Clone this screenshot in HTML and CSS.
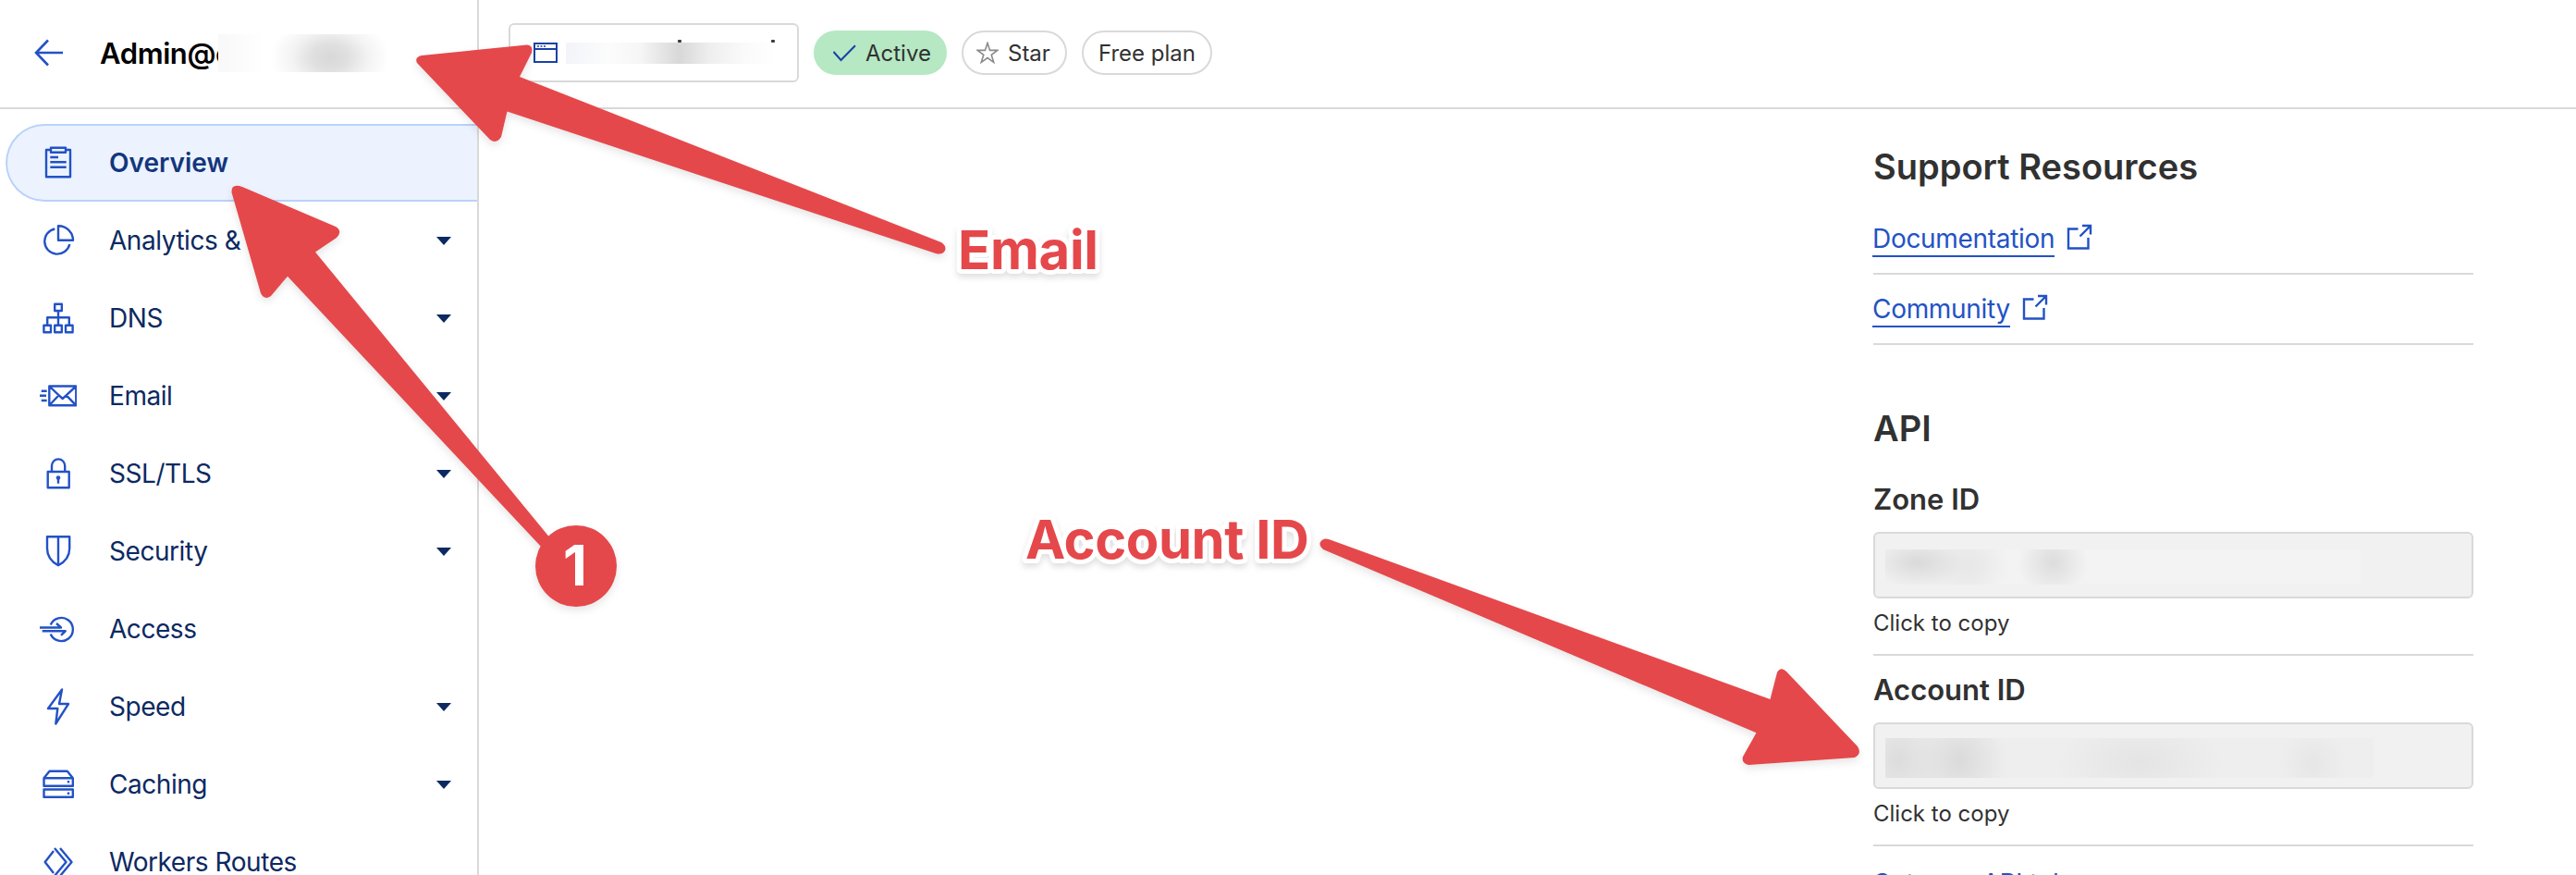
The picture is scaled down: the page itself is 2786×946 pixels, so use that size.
FILE: index.html
```html
<!DOCTYPE html>
<html lang="en">
<head>
<meta charset="utf-8">
<title>Overview</title>
<link rel="stylesheet" href="styles.css">
</head>
<body>
<div class="app">
  <header class="topbar">
    <div class="account">
      <svg class="back" viewBox="0 0 32 30"><path d="M31 15H2M15 1.500L2 15L15 28.500"/></svg>
      <span class="account-name">Admin@e</span>
      <span class="smudge smudge-account"></span>
    </div>
    <div class="zone">
      <div class="zone-select">
        <svg class="window" viewBox="0 0 26 22"><path d="M1 1h24v20H1zM1 7h24"/><path class="dots" d="M4 4h2M7.500 4h2M11 4h2"/></svg>
        <span class="smudge smudge-zone"></span>
      </div>
      <span class="badge active"><svg class="check" viewBox="0 0 26 20"><path d="M.5 9l8 9L24 2.300"/></svg>Active</span>
      <span class="badge star"><svg class="star-icon" viewBox="0 0 24 24"><path d="M12 1.500l2.600 7.900h8.200l-6.600 4.900 2.500 8L12 17.500l-6.700 4.800 2.500-8L1.200 9.400h8.200z"/></svg>Star</span>
      <span class="badge plan">Free plan</span>
    </div>
  </header>
  <div class="body">
    <nav class="sidebar">
      <a class="item selected"><svg class="icon" viewBox="0 0 40 40"><path d="M12 6H7v29.300h26V6h-5M12 3.700h16v5H12zM11.300 14H20M11.300 19.300h17.400M11.300 24.700h17.400"/></svg><span>Overview</span></a>
      <a class="item"><svg class="icon" viewBox="0 0 40 40"><path d="M16.300 7.500A13.700 13.700 0 1 0 32.300 24M20 4.300v15.400h16A15.700 15.700 0 0 0 20 4.300z"/></svg><span>Analytics &amp; Logs</span><i class="caret"></i></a>
      <a class="item"><svg class="icon" viewBox="0 0 40 40"><path d="M16.200 4.700h7.600V12h-7.600zM20 12v15.700M8.200 27.700v-8.400h23.600v8.400M4.400 27.700H12v7.600H4.400zM16.200 27.700h7.600v7.600h-7.600zM28 27.700h7.600v7.600H28z"/></svg><span>DNS</span><i class="caret"></i></a>
      <a class="item"><svg class="icon" viewBox="0 0 40 40"><path d="M10.300 9.500h29v20.800h-29zM10.300 9.500L20.700 19.300l4 3.700 4-3.700L39.300 9.500M10.300 30.300l10.400-11M39.300 30.300l-10.600-11M1.700 14.700h6M0 19.700h7M1.700 25h6"/></svg><span>Email</span><i class="caret"></i></a>
      <a class="item"><svg class="icon" viewBox="0 0 40 40"><path d="M8.700 18h23v17.300h-23zM13 18v-6.500a7.100 7.100 0 0 1 14.200 0V18M20 25v5.700"/><circle class="dot" cx="20" cy="24.500" r="2.300"/></svg><span>SSL/TLS</span><i class="caret"></i></a>
      <a class="item"><svg class="icon" viewBox="0 0 40 40"><path d="M8 4.300h24.200V17c0 9-5 14.500-12.200 18.300C13 31.500 8 26 8 17zM20 4.300v31"/></svg><span>Security</span><i class="caret"></i></a>
      <a class="item"><svg class="icon" viewBox="0 0 40 40"><path d="M11.700 15.500A12.600 12.600 0 1 1 11.700 25.500M0 18.500h23l-5-4.500M2.700 22.300h25l-4.700 4.500"/></svg><span>Access</span></a>
      <a class="item"><svg class="icon" viewBox="0 0 40 40"><path d="M24 1.500L9 22h10.300L17.300 38.500 31 17H21z"/></svg><span>Speed</span><i class="caret"></i></a>
      <a class="item"><svg class="icon" viewBox="0 0 40 40"><path d="M4.500 13.300h31.300v8.400H4.500zM4.500 13.300l6-7.600h19.300l6 7.600M4.500 25.500h31.300v8.300H4.500zM29.800 17.300h2.400M29.800 29.700h2.400"/></svg><span>Caching</span><i class="caret"></i></a>
      <a class="item"><svg class="icon" viewBox="0 0 40 40"><path d="M15 8L5.700 20 15 32M16 5l12.500 15L16 35M22 5l12.500 15L22 35"/></svg><span>Workers Routes</span></a>
    </nav>
    <main class="content">
      <aside class="side">
        <h2 class="title">Support Resources</h2>
        <div class="link-row"><a class="link">Documentation</a><svg class="ext" viewBox="0 0 28 28"><path d="M12.500 5.500H2v21h21.500V15M17 2h9v9.500M26 2L14.500 13.500"/></svg></div>
        <div class="link-row"><a class="link">Community</a><svg class="ext" viewBox="0 0 28 28"><path d="M12.500 5.500H2v21h21.500V15M17 2h9v9.500M26 2L14.500 13.500"/></svg></div>
        <h2 class="title api">API</h2>
        <section class="field">
          <h3 class="label">Zone ID</h3>
          <div class="box"><span class="smudge smudge-a"></span></div>
          <p class="hint">Click to copy</p>
        </section>
        <section class="field">
          <h3 class="label">Account ID</h3>
          <div class="box"><span class="smudge smudge-b"></span></div>
          <p class="hint">Click to copy</p>
        </section>
        <a class="token">Get your API token</a>
      </aside>
    </main>
  </div>
  <svg class="notes" viewBox="0 0 2786 946">
    <g class="arrows">
      <path d="M456 60L570 48.500Q577 49 575 57L562 83L1018 262Q1024 266 1022 271Q1019 276 1012 274L548.500 120.500L542 148Q537 156 530 151L451 68Q448 62 456 60Z"/>
      <path d="M262 202L363 245Q371 250 364 257L341 272.500L596 583L587 593L311 298.700L293 320Q286 325 282 317L250.500 208Q250 198 262 202Z"/>
      <path d="M1437 583L1914.500 756L1922 727Q1926 720 1932 726L2009 807Q2014 815 2006 819L1891 827Q1883 825 1885 818L1899.500 792.300L1431 594Q1426 590 1428 586Q1431 581 1437 583Z"/>
      <circle cx="623" cy="612" r="44"/>
    </g>
    <text class="num" x="622" y="633">1</text>
    <text class="note" x="1036" y="291" textLength="152">Email</text>
    <text class="note" x="1109" y="604" textLength="307">Account ID</text>
  </svg>
</div>
</body>
</html>
```
FILE: styles.css
```css
* { box-sizing: border-box; }
body { margin: 0; font-family: Inter, "Liberation Sans", sans-serif; background: #fff; color: #313131; }
svg { fill: none; flex: none; }
.app { position: relative; width: 2786px; height: 946px; overflow: hidden; display: flex; flex-direction: column; }
.topbar { display: flex; height: 118px; flex: none; border-bottom: 2px solid #d9d9d9; }
.account { position: relative; width: 518px; border-right: 2px solid #d9d9d9; padding: 0 0 2px 37px; display: flex; align-items: center; }
.back { width: 32px; height: 30px; stroke: #2352c5; stroke-width: 2.6; }
.account-name { margin-left: 39px; font-size: 31px; font-weight: 600; letter-spacing: -0.4px; color: #000; }
.smudge { display: block; }
.smudge-account { position: absolute; left: 236px; top: 37px; width: 200px; height: 41px; background: radial-gradient(ellipse 64px 46px at 121px 25px, #d8d8d8 0, rgba(218,218,218,.85) 30%, rgba(232,232,232,.5) 65%, rgba(255,255,255,0) 100%), linear-gradient(90deg, #f8f8f8, #fff 25%); }
.zone { display: flex; align-items: center; padding: 0 0 2px 32px; }
.zone-select { width: 314px; height: 64px; border: 2px solid #d9d9d9; border-radius: 6px; display: flex; align-items: center; padding-left: 25px; margin-right: 16px; }
.window { width: 26px; height: 22px; stroke: #1a41a5; stroke-width: 2; }
.window .dots { stroke-width: 1.500; }
.smudge-zone { position: relative; width: 228px; height: 23px; margin-left: 9px; background: linear-gradient(90deg, #f2f4f9, #fcfcfc 20%, #f6f6f6 35%, #d8d8d8 54%, #eee 68%, #fafafa 84%, #fff); }
.smudge-zone::before, .smudge-zone::after { content: ""; position: absolute; top: -3px; left: 121px; width: 4px; height: 3px; border-radius: 1px; background: #3c3c3c; }
.smudge-zone::after { left: 222px; }
.badge { height: 48px; border-radius: 24px; border: 2px solid #d9d9d9; display: flex; align-items: center; font-size: 24px; margin-right: 16px; }
.active { width: 144px; background: #b5e8c3; border-color: #b5e8c3; padding-left: 19px; }
.check { width: 26px; height: 20px; margin-right: 9px; stroke: #1a41a5; stroke-width: 2; }
.star { width: 114px; padding-left: 14px; }
.star-icon { width: 24px; height: 24px; margin-right: 10px; stroke: #8a8a8a; stroke-width: 1.600; }
.plan { width: 141px; padding-left: 16px; }
.body { display: flex; flex: 1; min-height: 0; }
.sidebar { width: 518px; flex: none; border-right: 2px solid #d9d9d9; padding: 16px 0 0 6px; }
.item { display: flex; align-items: center; height: 84px; padding: 0 28px 0 35px; font-size: 28px; letter-spacing: -0.45px; color: #0c2961; border: 2px solid transparent; border-right: 0; }
.item span { margin-left: 35px; }
.selected { background: #ecf3fe; border-color: #b9d2fb; border-radius: 42px 0 0 42px; font-weight: 600; letter-spacing: 0; color: #13367d; }
.icon { width: 40px; height: 40px; stroke: #2352c5; stroke-width: 2.400; stroke-linejoin: round; }
.icon .dot { fill: #2352c5; stroke: none; }
.caret { margin-left: auto; border: 8px solid transparent; border-top: 9px solid #0c2961; border-bottom: 0; }
.content { flex: 1; display: flex; justify-content: flex-end; padding-right: 111px; }
.side { width: 649px; padding-top: 38px; }
.title { margin: 0; font-size: 38px; font-weight: 600; line-height: 48px; }
.link-row { height: 76px; border-bottom: 2px solid #d9d9d9; display: flex; align-items: flex-start; padding-top: 17px; }
.title + .link-row { margin-top: 17px; }
.link { margin-left: -1px; font-size: 28px; line-height: 40px; height: 40px; letter-spacing: -0.3px; border-bottom: 2px solid #2352c5; color: #2352c5; }
.ext { width: 28px; height: 28px; margin: 4px 0 0 13px; stroke: #2352c5; stroke-width: 2.400; }
.api { margin-top: 66px; }
.field { height: 206px; border-bottom: 2px solid #d9d9d9; padding-top: 17px; }
.api + .field { margin-top: 16px; }
.label { margin: 0 0 15px; font-size: 31px; font-weight: 600; line-height: 40px; }
.box { height: 72px; border: 2px solid #d9d9d9; border-radius: 6px; background: #f1f1f1; padding: 17px 0 0 11px; }
.smudge-a { width: 514px; height: 38px; background: radial-gradient(ellipse 80px 44px at 35px 14px, #d9d9d9, rgba(236,236,236,.5) 60%, rgba(243,243,243,0)), radial-gradient(ellipse 50px 40px at 85px 16px, #e4e4e4, rgba(243,243,243,0)), radial-gradient(ellipse 38px 38px at 181px 14px, #dcdcdc, rgba(243,243,243,0)), #f3f3f3; }
.smudge-b { width: 528px; height: 43px; margin-top: -2px; background: radial-gradient(ellipse 50px 60px at 15px 24px, #dcdcdc, rgba(238,238,238,0)), radial-gradient(ellipse 52px 56px at 80px 24px, #dadada, rgba(238,238,238,0)), radial-gradient(ellipse 90px 50px at 275px 26px, #e4e4e4, rgba(238,238,238,0)), radial-gradient(ellipse 36px 40px at 462px 28px, #e6e6e6, rgba(238,238,238,0)), #eee; }
.hint { margin: 11px 0 0; font-size: 24px; line-height: 32px; }
.token { display: block; margin: 20px 0 0 -1px; font-size: 28px; line-height: 40px; letter-spacing: -0.3px; color: #2352c5; }
.notes { position: absolute; left: 0; top: 0; width: 2786px; height: 946px; }
.arrows { fill: #e5484b; filter: drop-shadow(0 4px 4px rgba(0,0,0,.1)); }
.num { fill: #fff; font-size: 60px; font-weight: 700; text-anchor: middle; }
.note { fill: #e5484b; font-size: 58px; font-weight: 700; stroke: #fff; stroke-width: 10px; stroke-linejoin: round; paint-order: stroke; filter: drop-shadow(0 4px 3px rgba(0,0,0,.12)); }
```
